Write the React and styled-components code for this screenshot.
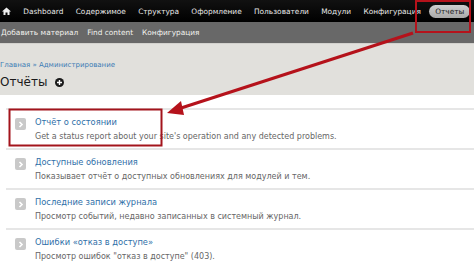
import React from "react";
import styled, { createGlobalStyle } from "styled-components";

const Global = createGlobalStyle`
  html, body { margin: 0; padding: 0; background: #fff; }
  body { width: 474px; height: 268px; overflow: hidden; font-family: "DejaVu Sans", Verdana, sans-serif; }
`;

const Page = styled.div`
  position: relative;
  width: 474px;
  height: 268px;
  overflow: hidden;
  background: #fff;
`;

const Toolbar = styled.div`
  height: 22px;
  background: linear-gradient(#111, #000);
  display: flex;
  align-items: center;
  gap: 12.3px;
  padding-left: 2px;
  white-space: nowrap;
`;

const NavItem = styled.span`
  color: #e8e8e8;
  font-size: 7.4px;
`;

const Pill = styled.span`
  background: linear-gradient(#cfcfcf, #a9a9a9);
  color: #222;
  font-size: 7.4px;
  border-radius: 8px;
  padding: 2px 6px;
  margin-left: -4px;
`;

const Shortcuts = styled.div`
  height: 21px;
  background: #686868;
  display: flex;
  align-items: center;
  gap: 9px;
  padding-left: 1px;
  white-space: nowrap;
`;

const Shortcut = styled.span`
  color: #f2f2ee;
  font-size: 7.4px;
`;

const Header = styled.div`
  height: 52px;
  background: #e1e0dc;
  box-sizing: border-box;
  padding: 17px 0 0 0;
  border-top: 1px solid #d2d1cd;
`;

const Breadcrumb = styled.div`
  font-size: 7px;
  color: #3a7bb5;
`;

const TitleRow = styled.div`
  display: flex;
  align-items: center;
  gap: 8px;
  margin-top: 6px;
`;

const Title = styled.h1`
  margin: 0;
  font-family: "DejaVu Sans", Verdana, sans-serif;
  font-weight: normal;
  font-size: 12px;
  color: #1a1a1a;
`;

const List = styled.div`
  margin: 13px 0 0 6px;
  border-top: 2px solid #e6e6e6;
`;

const Item = styled.div`
  height: 40px;
  border-bottom: 2px solid #e6e6e6;
  display: flex;
  align-items: flex-start;
  padding: 7px 0 0 9px;
  box-sizing: border-box;
  gap: 9px;
`;

const Icon = styled.span`
  width: 11px;
  height: 12px;
  margin-top: 1px;
  border-radius: 2px;
  background: #c9c9c9;
  display: flex;
  align-items: center;
  justify-content: center;
  flex: none;
`;

const Text = styled.div`
  display: flex;
  flex-direction: column;
  gap: 5px;
`;

const ItemTitle = styled.span`
  font-size: 8.3px;
  color: #2f6fa8;
  white-space: nowrap;
`;

const Desc = styled.span`
  font-size: 8px;
  color: #666;
  white-space: nowrap;
`;

const Overlay = styled.svg`
  position: absolute;
  left: 0;
  top: 0;
  pointer-events: none;
`;

const Chevron = () => (
  <svg width="6" height="7" viewBox="0 0 6 7">
    <path d="M1.5 1 L4 3.5 L1.5 6" stroke="#fff" strokeWidth="1.6" fill="none" />
  </svg>
);

const HomeIcon = () => (
  <svg width="9" height="8" viewBox="0 0 9 8">
    <path d="M4.5 0.5 L9 4.5 L7.5 4.5 L7.5 8 L5.5 8 L5.5 5.5 L3.5 5.5 L3.5 8 L1.5 8 L1.5 4.5 L0 4.5 Z" fill="#eee" />
  </svg>
);

const PlusIcon = () => (
  <svg width="9" height="9" viewBox="0 0 9 9">
    <circle cx="4.5" cy="4.5" r="4.5" fill="#1a1a1a" />
    <path d="M4.5 2 V7 M2 4.5 H7" stroke="#fff" strokeWidth="1.4" />
  </svg>
);

const items = [
  ["Отчёт о состоянии", "Get a status report about your site's operation and any detected problems."],
  ["Доступные обновления", "Показывает отчёт о доступных обновлениях для модулей и тем."],
  ["Последние записи журнала", "Просмотр событий, недавно записанных в системный журнал."],
  ["Ошибки «отказ в доступе»", "Просмотр ошибок \"отказ в доступе\" (403)."],
];

export default function App() {
  return (
    <Page>
      <Global />
      <Toolbar>
        <HomeIcon />
        <NavItem>Dashboard</NavItem>
        <NavItem>Содержимое</NavItem>
        <NavItem>Структура</NavItem>
        <NavItem>Оформление</NavItem>
        <NavItem>Пользователи</NavItem>
        <NavItem>Модули</NavItem>
        <NavItem>Конфигурация</NavItem>
        <Pill>Отчеты</Pill>
      </Toolbar>
      <Shortcuts>
        <Shortcut>Добавить материал</Shortcut>
        <Shortcut>Find content</Shortcut>
        <Shortcut>Конфигурация</Shortcut>
      </Shortcuts>
      <Header>
        <Breadcrumb>Главная » Администрирование</Breadcrumb>
        <TitleRow>
          <Title>Отчёты</Title>
          <PlusIcon />
        </TitleRow>
      </Header>
      <List>
        {items.map(([t, d]) => (
          <Item key={t}>
            <Icon><Chevron /></Icon>
            <Text>
              <ItemTitle>{t}</ItemTitle>
              <Desc>{d}</Desc>
            </Text>
          </Item>
        ))}
      </List>
      <Overlay width="474" height="268" viewBox="0 0 474 268">
        <rect x="416" y="1" width="54" height="31" fill="none" stroke="#b5121b" strokeWidth="2" />
        <rect x="9.5" y="109.5" width="152" height="36" fill="none" stroke="#a3141c" strokeWidth="2" />
        <line x1="413" y1="33" x2="178" y2="109" stroke="#b5121b" strokeWidth="3.2" />
        <polygon points="167,113 181,101 184,115" fill="#b5121b" />
      </Overlay>
    </Page>
  );
}
